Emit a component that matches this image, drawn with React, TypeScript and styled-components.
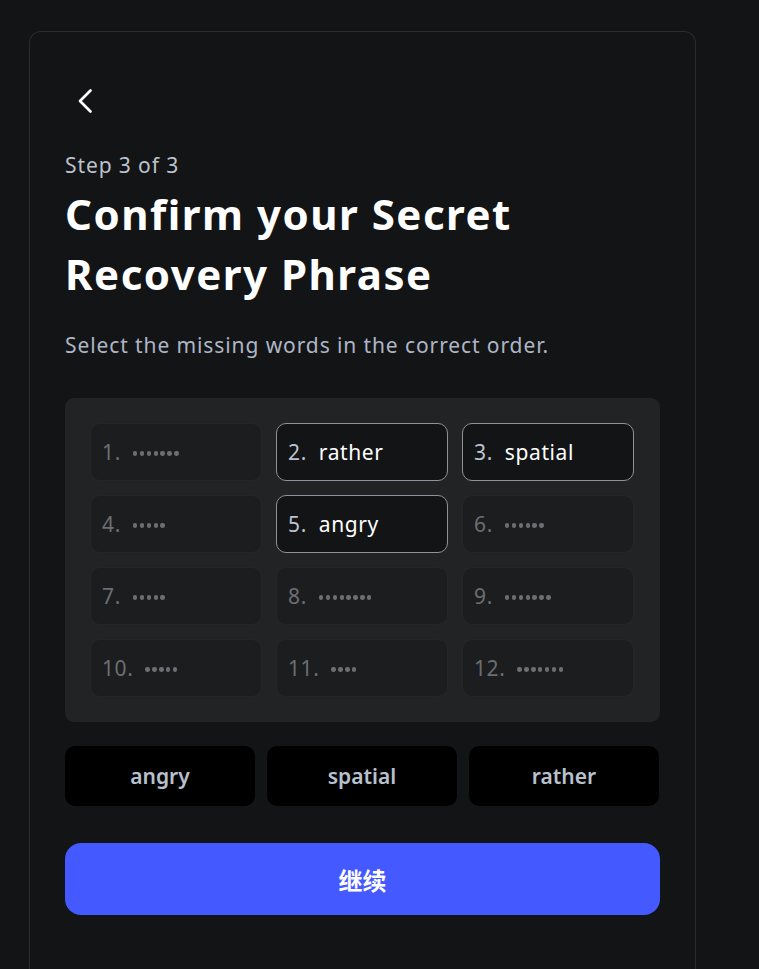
import React from "react";
import styled, { createGlobalStyle } from "styled-components";

const Global = createGlobalStyle`
  html, body { margin: 0; padding: 0; background: #131416; }
  body { font-family: "Noto Sans", "Open Sans", sans-serif; -webkit-font-smoothing: antialiased; }
  * { box-sizing: border-box; }
`;

const Page = styled.div`
  padding: 31px 63px 0 29px;
  min-height: 969px;
`;

const Card = styled.div`
  width: 667px;
  height: 938px;
  border: 1px solid #2b2c30;
  border-bottom: none;
  border-radius: 12px 12px 0 0;
  padding: 56px 35px 0 35px;
  display: flex;
  flex-direction: column;
`;

const BackButton = styled.button`
  width: 30px;
  height: 26px;
  margin-left: 12px;
  padding: 0;
  background: none;
  border: none;
  display: flex;
  align-items: center;
  color: #ffffff;
  cursor: pointer;
`;

const Step = styled.div`
  margin-top: 37px;
  font-size: 21px;
  line-height: 28px;
  letter-spacing: 0.9px;
  color: #bdc2cd;
`;

const Title = styled.h1`
  margin: 5px 0 0 0;
  font-size: 42px;
  line-height: 60px;
  font-weight: 700;
  letter-spacing: 1.5px;
  color: #ffffff;
`;

const Subtitle = styled.p`
  margin: 27px 0 0 0;
  font-size: 21px;
  line-height: 28px;
  letter-spacing: 0.9px;
  color: #aeb6c6;
`;

const Panel = styled.div`
  margin-top: 39px;
  background: #222325;
  border-radius: 9px;
  padding: 25px;
  display: grid;
  grid-template-columns: repeat(3, 172px);
  grid-auto-rows: 58px;
  gap: 14px;
`;

const Cell = styled.div<{ $filled: boolean }>`
  border-radius: 10px;
  border: 1px solid ${(p) => (p.$filled ? "#8f929b" : "#25262a")};
  background: ${(p) => (p.$filled ? "#131416" : "#1c1d1f")};
  display: flex;
  align-items: center;
  padding-left: 11px;
  gap: 12px;
  font-size: 21px;
  letter-spacing: 0.6px;
`;

const Num = styled.span<{ $filled: boolean }>`
  color: ${(p) => (p.$filled ? "#bcc3d0" : "#6c6e73")};
`;

const Word = styled.span`
  color: #ffffff;
`;

const Dots = styled.span`
  display: flex;
  gap: 2.6px;
  margin-top: 3px;
`;

const Dot = styled.span`
  width: 4.3px;
  height: 4.3px;
  border-radius: 50%;
  background: #6c6e73;
`;

const Chips = styled.div`
  margin-top: 24px;
  display: grid;
  grid-template-columns: repeat(3, 190px);
  gap: 12px;
`;

const Chip = styled.button`
  height: 60px;
  border: none;
  border-radius: 10px;
  background: #000000;
  color: #b9c0cd;
  font-family: "Noto Sans", "Open Sans", sans-serif;
  font-weight: 600;
  font-size: 21px;
  cursor: pointer;
`;

const Continue = styled.button`
  margin-top: 37px;
  height: 72px;
  width: 595px;
  border: none;
  border-radius: 16px;
  background: #4459ff;
  color: #ffffff;
  font-family: "Noto Sans", "Noto Sans CJK SC", sans-serif;
  font-weight: 700;
  font-size: 24px;
  cursor: pointer;
`;

const words: { n: number; word?: string; dots?: number }[] = [
  { n: 1, dots: 7 },
  { n: 2, word: "rather" },
  { n: 3, word: "spatial" },
  { n: 4, dots: 5 },
  { n: 5, word: "angry" },
  { n: 6, dots: 6 },
  { n: 7, dots: 5 },
  { n: 8, dots: 8 },
  { n: 9, dots: 7 },
  { n: 10, dots: 5 },
  { n: 11, dots: 4 },
  { n: 12, dots: 7 },
];

export default function App() {
  return (
    <>
      <Global />
      <Page>
        <Card>
          <BackButton aria-label="back">
            <svg width="16" height="26" viewBox="0 0 16 26" fill="none">
              <path d="M13.5 2.5 L3 13 L13.5 23.5" stroke="#fff" strokeWidth="2.7" strokeLinecap="round" strokeLinejoin="round" />
            </svg>
          </BackButton>
          <Step>Step 3 of 3</Step>
          <Title>
            Confirm your Secret
            <br />
            Recovery Phrase
          </Title>
          <Subtitle>Select the missing words in the correct order.</Subtitle>
          <Panel>
            {words.map((w) => (
              <Cell key={w.n} $filled={!!w.word}>
                <Num $filled={!!w.word}>{w.n}.</Num>
                {w.word ? (
                  <Word>{w.word}</Word>
                ) : (
                  <Dots>
                    {Array.from({ length: w.dots || 0 }).map((_, i) => (
                      <Dot key={i} />
                    ))}
                  </Dots>
                )}
              </Cell>
            ))}
          </Panel>
          <Chips>
            <Chip>angry</Chip>
            <Chip>spatial</Chip>
            <Chip>rather</Chip>
          </Chips>
          <Continue>继续</Continue>
        </Card>
      </Page>
    </>
  );
}
